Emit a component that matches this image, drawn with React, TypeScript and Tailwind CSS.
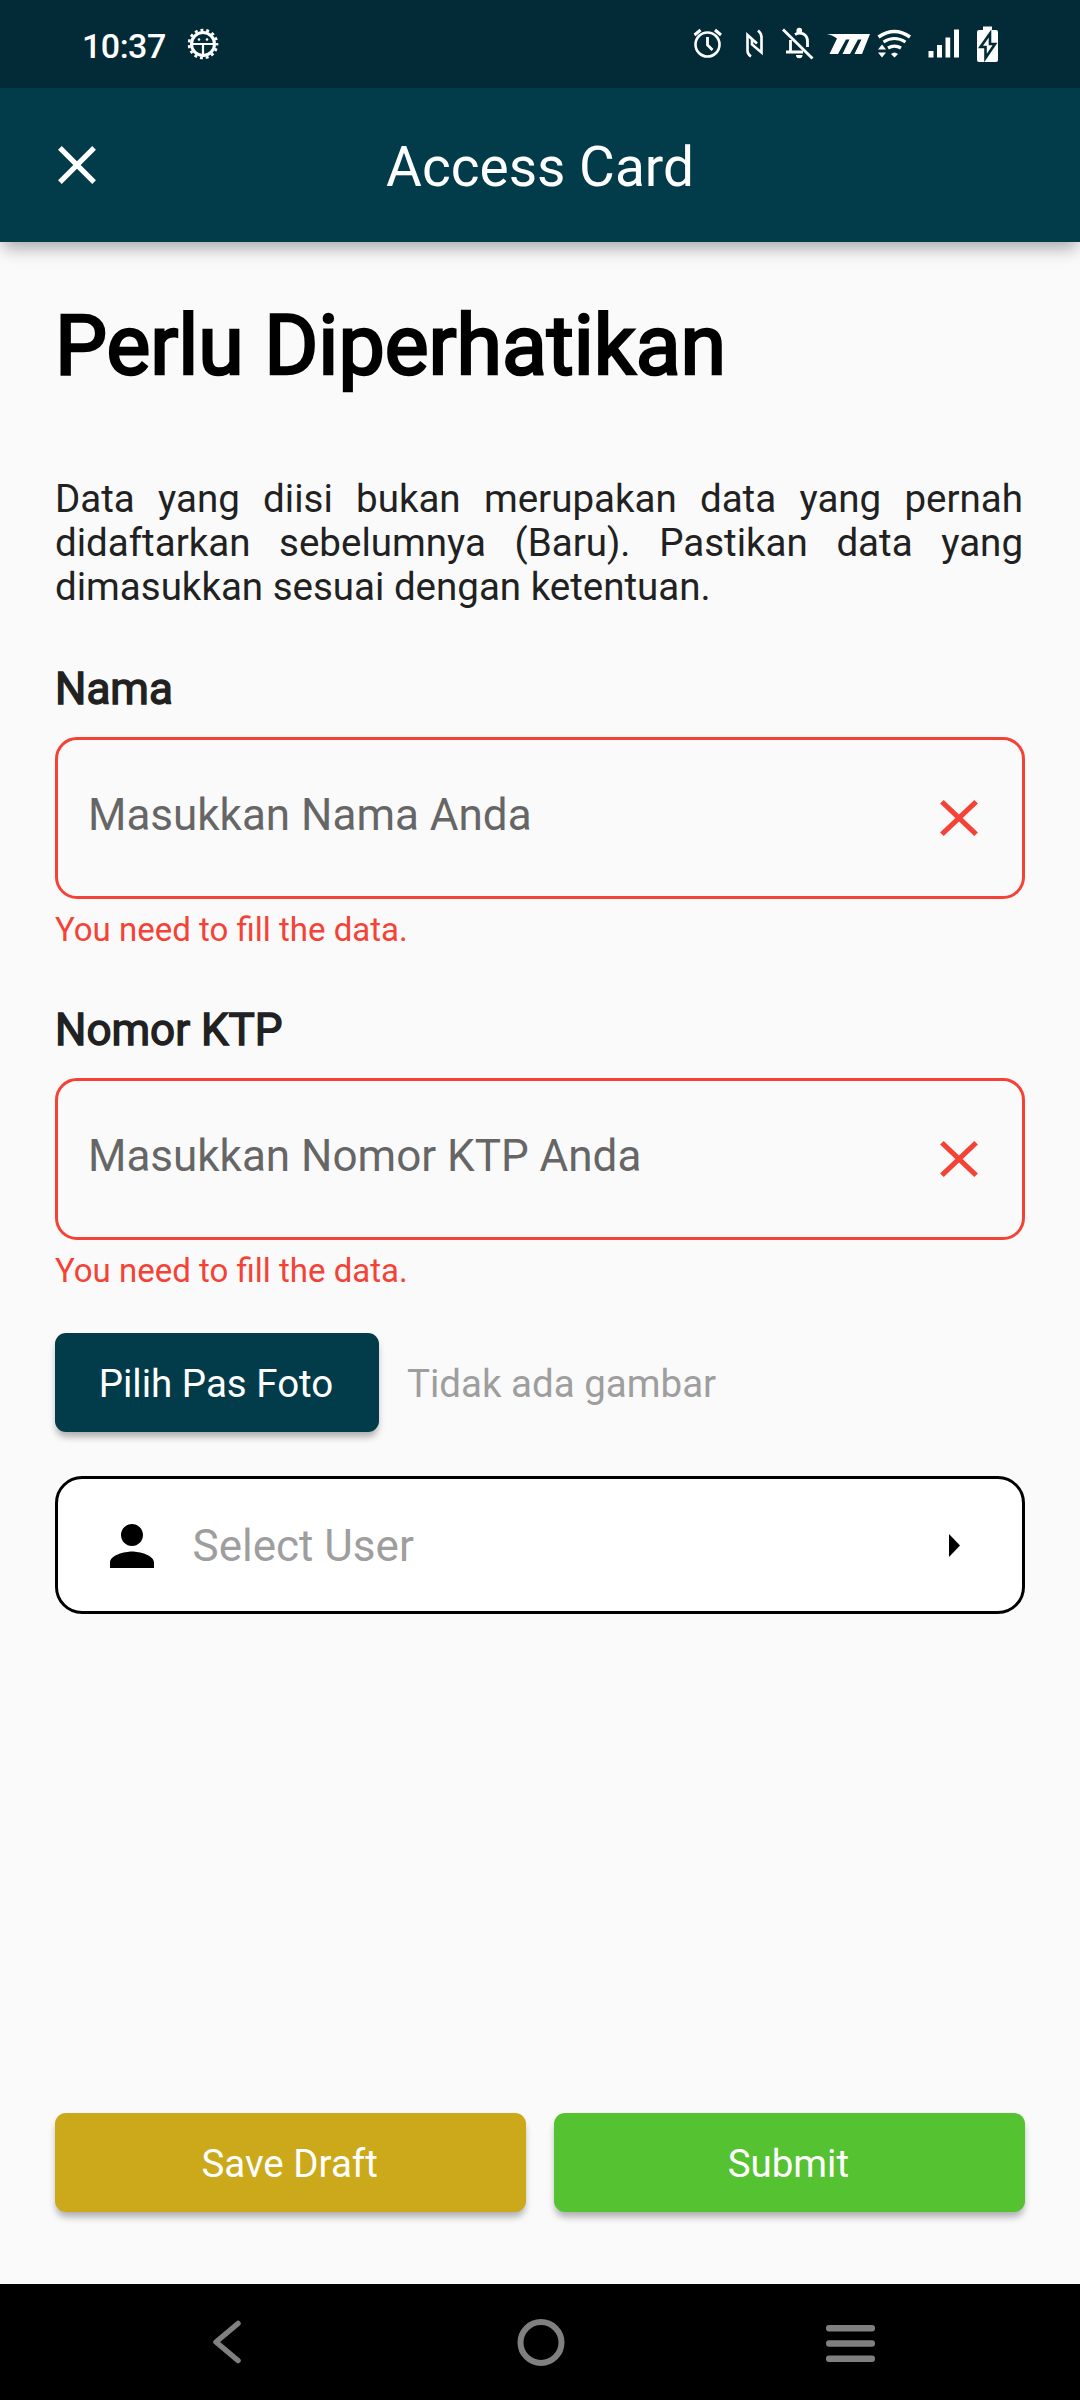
import React from "react";

function StatusIcons() {
  return (
    <svg className="h-[88px] w-[360px]" viewBox="690 0 360 88" fill="none" stroke="#fff">
      {/* alarm */}
      <circle cx="707.5" cy="44.5" r="12" strokeWidth="2.6" />
      <path d="M707.5 37v8l5 5" strokeWidth="2.8" />
      <path d="M694.5 35l6-5M721 35l-6-5" strokeWidth="3" />
      {/* nfc */}
      <path d="M751 56.500c-2.500-1.500-3.500-3.500-3.500-6V35l9.500 8.500" strokeWidth="2.6" />
      <path d="M758 30.500c2.500 2 3.500 3.500 3.500 6.500V52.500L752 44.500V39" strokeWidth="2.6" />
      {/* muted bell */}
      <path d="M783 29.500L812.500 58.500" strokeWidth="2.8" />
      <path d="M786 52h17M790.500 52V40M795 34.500c6-3.500 12.500 0 12.500 7V47" strokeWidth="2.8" />
      <path d="M796.500 33v-2.500a2.800 2.800 0 0 1 5.600 0V33zM796 55h6.500a3.200 3.200 0 0 1-6.500 0z" fill="#fff" stroke="none" />
      {/* carrier mark */}
      <path d="M827 34H870L862 54H854.500L861.500 39.500H858L850 54H842.500L849.500 39.500H846L838 54H829.500L837 38.500C834 36 831 35 827 34z" fill="#fff" stroke="none" />
      {/* wifi */}
      <path d="M878.500 37q16-11 31.500 0" strokeWidth="3.6" />
      <path d="M883.500 42q11-7 22 0" strokeWidth="3.2" />
      <path d="M888 48q6.500-3.800 13 0" strokeWidth="3.2" />
      <path d="M894.500 57.500l-3.500-3.500q3.500-3 7 0zM878 49.500l4-5 4 5zM878 52.500l4 5 4-5z" fill="#fff" stroke="none" />
      {/* signal */}
      <path d="M928.500 51h5v6.500h-5zM937 45h5v12.500h-5zM945.500 37.500h4.700v20h-4.700zM954 29.500h5v28h-5z" fill="#fff" stroke="none" />
      {/* battery */}
      <path d="M983 26.500h9V30h4a2 2 0 0 1 2 2v28a2 2 0 0 1-2 2h-17a2 2 0 0 1-2-2V32a2 2 0 0 1 2-2h4z" fill="#fff" stroke="none" />
      <path d="M990 33.500L980.500 47h5v11L995 44h-5z" fill="#fff" stroke="#022b37" strokeWidth="2.6" />
    </svg>
  );
}

function BugIcon() {
  return (
    <svg className="h-[34px] w-[34px]" viewBox="-17 -17 34 34" fill="none" stroke="#fff">
      <circle r="14" strokeWidth="2.6" strokeDasharray="2.930 2.930" strokeDashoffset="1.460" />
      <circle r="11.500" strokeWidth="3" />
      <path d="M-11.500 0H11.500M0 0V13" strokeWidth="2.2" />
      <circle cx="-4" cy="-4.500" r="1.300" fill="#fff" stroke="none" />
      <circle cx="4" cy="-4.500" r="1.300" fill="#fff" stroke="none" />
    </svg>
  );
}

function CloseIcon({ className }: { className: string }) {
  return (
    <svg className={className} viewBox="0 0 38 38" preserveAspectRatio="none" fill="none" stroke="currentColor" strokeWidth="5.2">
      <path d="M1.900 1.900L36.100 36.100M36.100 1.900L1.900 36.100" />
    </svg>
  );
}

function Field({ label, hint }: { label: string; hint: string }) {
  return (
    <div className="flex h-[287px] flex-col">
      <div className="text-[44px] leading-[52px] text-[#212121] [-webkit-text-stroke:1.4px_#212121]">{label}</div>
      <div className="mt-[22px] flex h-[162px] items-center justify-between rounded-[22px] border-[3px] border-[#f44336] pl-[30px] pr-[44px]">
        <span className="-mt-[6px] text-[44px] leading-[52px] text-[#666666]">{hint}</span>
        <CloseIcon className="h-[36px] w-[38px] text-[#f44336]" />
      </div>
      <p className="mt-[11px] text-[33px] leading-[39px] text-[#f44336]">You need to fill the data.</p>
    </div>
  );
}

export default function App() {
  return (
    <div className="flex h-[2400px] w-[1080px] flex-col overflow-hidden bg-[#fafafa] font-[Roboto,sans-serif]">
      <div className="relative z-10 flex h-[88px] shrink-0 items-center justify-between bg-[#022b37] pl-[82px] pr-[30px]">
        <div className="flex items-center gap-[20.5px]">
          <span className="pt-[3px] text-[34px] leading-[40px] font-medium tracking-[-0.5px] text-white">10:37</span>
          <BugIcon />
        </div>
        <StatusIcons />
      </div>
      <header className="grid h-[154px] shrink-0 grid-cols-[1fr_auto_1fr] items-center bg-[#023b49] pl-[58px] pr-[58px] text-white shadow-[0_9px_16px_-3px_rgba(0,0,0,0.33)]">
        <CloseIcon className="h-[38px] w-[38px]" />
        <h1 className="pt-[3px] text-[55px] leading-[64px]">Access Card</h1>
      </header>
      <main className="flex flex-1 flex-col px-[55px]">
        <h2 className="mt-[55px] text-[82.5px] leading-[97px] text-black [-webkit-text-stroke:2.6px_#000]">Perlu Diperhatikan</h2>
        <p className="mt-[83px] pr-[2px] text-justify text-[38.5px] leading-[44px] text-[#212121]">
          Data yang diisi bukan merupakan data yang pernah didaftarkan sebelumnya (Baru). Pastikan data yang dimasukkan sesuai dengan ketentuan.
        </p>
        <div className="mt-[54px] flex flex-col gap-[54px]">
          <Field label="Nama" hint="Masukkan Nama Anda" />
          <Field label="Nomor KTP" hint="Masukkan Nomor KTP Anda" />
        </div>
        <div className="mt-[42px] flex items-center gap-[28px]">
          <button className="h-[99px] w-[324px] rounded-[11px] bg-[#023b49] pt-[3px] pr-[2px] text-[38.5px] text-white shadow-[0_6px_7px_-1px_rgba(0,0,0,0.3)]">Pilih Pas Foto</button>
          <span className="pt-[3px] text-[38.5px] text-[#9e9e9e]">Tidak ada gambar</span>
        </div>
        <div className="mt-[44px] flex h-[138px] items-center rounded-[27px] border-[3px] border-black bg-white pl-[52px] pr-[62px]">
          <svg className="mt-[2px] h-[44px] w-[44px]" viewBox="4 4 16 16"><path d="M12 12c2.210 0 4-1.790 4-4s-1.790-4-4-4-4 1.790-4 4 1.790 4 4 4zm0 2c-2.670 0-8 1.340-8 4v2h16v-2c0-2.660-5.330-4-8-4z" /></svg>
          <span className="ml-[38.5px] flex-1 pt-[2px] text-[44px] leading-[52px] text-[#9e9e9e]">Select User</span>
          <svg className="h-[23px] w-[11px]" viewBox="0 0 11 23"><path d="M0 0L11 11.500L0 23z" /></svg>
        </div>
        <div className="mt-auto mb-[72px] grid grid-cols-2 gap-[27.5px]">
          <button className="h-[99px] rounded-[11px] bg-[#cca91a] pt-[2px] pr-[2px] text-[38.5px] text-white shadow-[0_6px_7px_-1px_rgba(0,0,0,0.3)]">Save Draft</button>
          <button className="h-[99px] rounded-[11px] bg-[#55c232] pt-[2px] pr-[2px] text-[38.5px] text-white shadow-[0_6px_7px_-1px_rgba(0,0,0,0.3)]">Submit</button>
        </div>
      </main>
      <nav className="flex h-[116px] shrink-0 items-center bg-black pl-[212px]">
        <svg className="h-[44px] w-[30px]" viewBox="0 0 30 44" fill="none" stroke="#808080" strokeWidth="5.5" strokeLinecap="round" strokeLinejoin="round"><path d="M26 3.500L4 22L26 40.500" /></svg>
        <svg className="ml-[274.5px] h-[48px] w-[48px]" viewBox="0 0 48 48" fill="none" stroke="#808080" strokeWidth="6"><circle cx="24" cy="24.500" r="20.500" /></svg>
        <svg className="mt-[3px] ml-[261.5px] h-[37px] w-[49px]" viewBox="0 0 49 37" fill="#808080"><rect width="49" height="6.500" rx="3" /><rect y="15.300" width="49" height="6.500" rx="3" /><rect y="30.500" width="49" height="6.500" rx="3" /></svg>
      </nav>
    </div>
  );
}
